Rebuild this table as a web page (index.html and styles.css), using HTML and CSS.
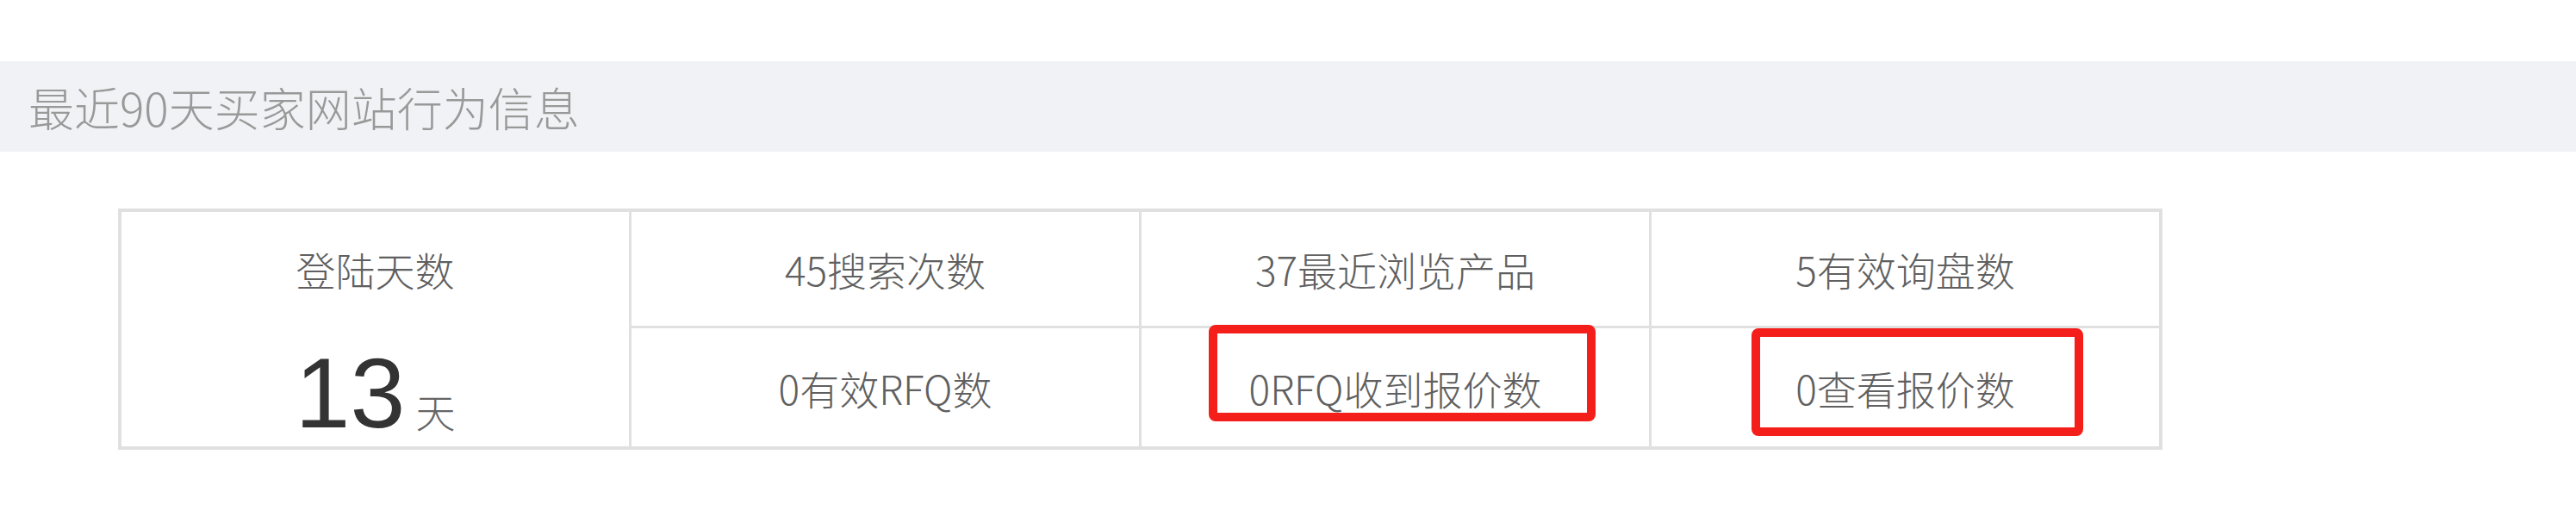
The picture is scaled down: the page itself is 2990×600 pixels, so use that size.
FILE: index.html
```html
<!DOCTYPE html>
<html lang="zh-CN">

<head>
    <meta charset="UTF-8">
    <meta name="viewport" content="width=device-width, initial-scale=1.0">
    <title>买家网站行为信息</title>
    <link rel="stylesheet" href="styles.css">
</head>

<body>
    <div class="section-title">最近90天买家网站行为信息</div>

    <div class="stats">
        <div class="cell login">
            <div class="login-label">登陆天数</div>
            <div class="login-value">13<span class="unit">天</span></div>
        </div>
        <div class="cell">45搜索次数</div>
        <div class="cell">37最近浏览产品</div>
        <div class="cell">5有效询盘数</div>
        <div class="cell">0有效RFQ数</div>
        <div class="cell">
            0RFQ收到报价数
            <span class="mark mark-rfq"></span>
        </div>
        <div class="cell">
            0查看报价数
            <span class="mark mark-quote"></span>
        </div>
    </div>
</body>

</html>
```

FILE: styles.css
```css
body {
    margin: 0;
    background-color: #fff;
    font-family: "Noto Sans CJK SC", "Liberation Sans", sans-serif;
    font-weight: 300;
}

.section-title {
    margin-top: 71px;
    height: 105px;
    padding-left: 33px;
    display: flex;
    align-items: center;
    background-color: #f1f2f5;
    color: #999;
    font-size: 53px;
}

/* 表格: 背景色当作边框线 */
.stats {
    margin: 66px 0 0 137px;
    width: 2373px;
    box-sizing: border-box;
    padding: 4px;
    display: grid;
    grid-template-columns: repeat(4, 1fr);
    grid-template-rows: 132px 137px;
    gap: 3px;
    background-color: #e0e0e0;
}

.cell {
    position: relative;
    background-color: #fff;
    display: flex;
    align-items: center;
    justify-content: center;
    color: #606060;
    font-size: 46px;
}

.login {
    grid-row: span 2;
    flex-direction: column;
    justify-content: flex-start;
}

.login-label {
    height: 132px;
    display: flex;
    align-items: center;
}

.login-value {
    margin-top: 21px;
    font-family: "Liberation Sans", sans-serif;
    font-weight: 400;
    font-size: 115px;
    line-height: 115px;
    color: #333;
}

.unit {
    margin-left: 12px;
    font-family: "Noto Sans CJK SC", sans-serif;
    font-weight: 300;
    font-size: 46px;
    line-height: 1;
    color: #666;
}

/* 红框标注 */
.mark {
    position: absolute;
    border: 10px solid #f41e1b;
    border-radius: 8px;
}

.mark-rfq {
    left: 78px;
    top: -4px;
    width: 429px;
    height: 92px;
}

.mark-quote {
    left: 116px;
    top: 0;
    width: 365px;
    height: 105px;
}
```
